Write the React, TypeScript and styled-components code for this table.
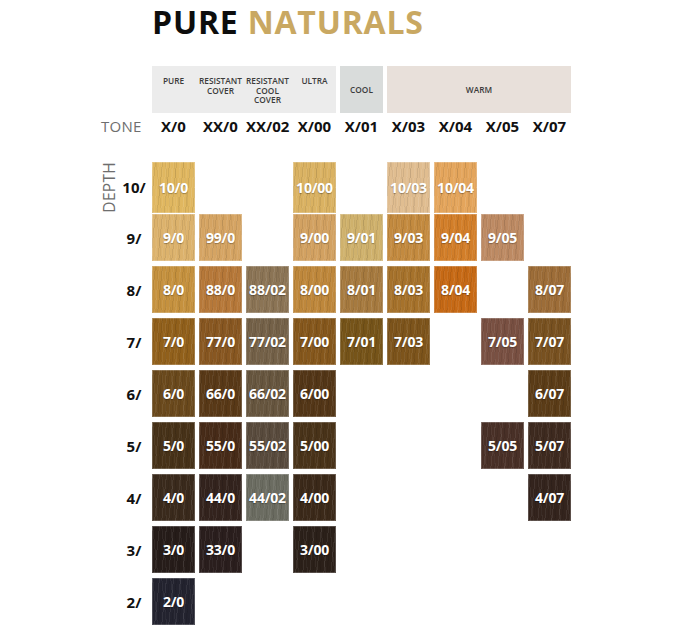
import styled, { createGlobalStyle, css } from 'styled-components';

type Shade = { code: string; color: string } | null;

const s = (code: string, color: string): Shade => ({ code, color });
const _ = null;

const groups = [
    { kind: 'neutral' as const, labels: [['PURE'], ['RESISTANT', 'COVER'], ['RESISTANT', 'COOL', 'COVER'], ['ULTRA']] },
    { kind: 'cool' as const, labels: [['COOL']] },
    { kind: 'warm' as const, labels: [['WARM']] },
];

const tones = ['X/0', 'XX/0', 'XX/02', 'X/00', 'X/01', 'X/03', 'X/04', 'X/05', 'X/07'];

const rows: { depth: string; shades: Shade[] }[] = [
    { depth: '10/', shades: [s('10/0', '#e0b760'), _, _, s('10/00', '#dab262'), _, s('10/03', '#e0bd90'), s('10/04', '#e4a55c'), _, _] },
    { depth: '9/', shades: [s('9/0', '#dcb26c'), s('99/0', '#d5a463'), _, s('9/00', '#d2a161'), s('9/01', '#cfb16c'), s('9/03', '#c38a3f'), s('9/04', '#d27e29'), s('9/05', '#bd8a63'), _] },
    { depth: '8/', shades: [s('8/0', '#c5913e'), s('88/0', '#b67839'), s('88/02', '#8b7455'), s('8/00', '#be873b'), s('8/01', '#a67a3f'), s('8/03', '#a6722b'), s('8/04', '#c66915'), _, s('8/07', '#9d6d38')] },
    { depth: '7/', shades: [s('7/0', '#91601b'), s('77/0', '#885721'), s('77/02', '#746148'), s('7/00', '#85571c'), s('7/01', '#765419'), s('7/03', '#7d541b'), _, s('7/05', '#795042'), s('7/07', '#785120')] },
    { depth: '6/', shades: [s('6/0', '#6a491c'), s('66/0', '#593917'), s('66/02', '#67563f'), s('6/00', '#533617'), _, _, _, _, s('6/07', '#5b3c17')] },
    { depth: '5/', shades: [s('5/0', '#473218'), s('55/0', '#472b18'), s('55/02', '#594b3d'), s('5/00', '#493319'), _, _, _, s('5/05', '#493027'), s('5/07', '#3e2a1f')] },
    { depth: '4/', shades: [s('4/0', '#3a2a1c'), s('44/0', '#33231d'), s('44/02', '#6b6c61'), s('4/00', '#3b2919'), _, _, _, _, s('4/07', '#34241d')] },
    { depth: '3/', shades: [s('3/0', '#261c19'), s('33/0', '#2a1e1d'), _, s('3/00', '#2b2019'), _, _, _, _, _] },
    { depth: '2/', shades: [s('2/0', '#23232f'), _, _, _, _, _, _, _, _] },
];

export default function App() {
    return (
        <>
            <GlobalStyle />
            <Page>
                <Title>
                    PURE <Gold>NATURALS</Gold>
                </Title>

                <HeaderRow>
                    <span />
                    {groups.map(g => (
                        <Group key={g.kind} $kind={g.kind}>
                            {g.labels.map((lines, i) => (
                                <GroupLabel key={i}>
                                    {lines.map(l => <div key={l}>{l}</div>)}
                                </GroupLabel>
                            ))}
                        </Group>
                    ))}
                </HeaderRow>

                <ToneRow>
                    <AxisLabel>TONE</AxisLabel>
                    {tones.map(t => <Tone key={t}>{t}</Tone>)}
                </ToneRow>

                <SwatchGrid>
                    {rows.map((row, r) => (
                        <Row key={row.depth}>
                            <DepthCell>
                                {r === 0 ? <DepthAxis>DEPTH</DepthAxis> : <span />}
                                <Depth>{row.depth}</Depth>
                            </DepthCell>
                            {row.shades.map((shade, i) =>
                                shade ? (
                                    <Swatch key={i} style={{ backgroundColor: shade.color }}>
                                        {shade.code}
                                    </Swatch>
                                ) : (
                                    <span key={i} />
                                )
                            )}
                        </Row>
                    ))}
                </SwatchGrid>
            </Page>
        </>
    );
}

const GlobalStyle = createGlobalStyle`
    html, body {
        margin: 0;
        padding: 0;
        background: #ffffff;
    }
    body {
        font-family: "Open Sans", "Liberation Sans", sans-serif;
        color: #111;
    }
`;

const columns = css`
    display: grid;
    grid-template-columns: 50px repeat(9, 43px);
    column-gap: 4px;
`;

const Page = styled.div`
    width: 676px;
    height: 627px;
    padding: 2px 0 0 98px;
    box-sizing: border-box;
    overflow: hidden;
`;

const Title = styled.h1`
    margin: 0 0 0 54px;
    font-size: 32px;
    line-height: 40px;
    font-weight: 700;
    letter-spacing: 0.8px;
    color: #0d0d0d;
`;

const Gold = styled.span`
    color: #c9a862;
`;

const HeaderRow = styled.div`
    ${columns};
    margin-top: 24px;
    height: 47px;
`;

const groupBg = { neutral: '#ececec', cool: '#d9dcdb', warm: '#e8e0da' };

const Group = styled.div<{ $kind: 'neutral' | 'cool' | 'warm' }>`
    background: ${p => groupBg[p.$kind]};
    grid-column: span ${p => (p.$kind === 'cool' ? 1 : 4)};
    display: ${p => (p.$kind === 'neutral' ? 'grid' : 'flex')};
    grid-template-columns: repeat(4, 43px);
    column-gap: 4px;
    align-items: ${p => (p.$kind === 'neutral' ? 'start' : 'center')};
    justify-content: center;
    padding-top: ${p => (p.$kind === 'neutral' ? '10px' : '0')};
    box-sizing: border-box;
`;

const GroupLabel = styled.div`
    font-size: 8.3px;
    line-height: 9.6px;
    font-weight: 600;
    color: #3b3b3b;
    text-align: center;
    white-space: nowrap;
`;

const ToneRow = styled.div`
    ${columns};
    margin-top: 3px;
    height: 20px;
    align-items: center;
`;

const AxisLabel = styled.div`
    font-size: 15px;
    font-weight: 400;
    color: #6e6e6e;
    margin-left: 3px;
    letter-spacing: 0.3px;
`;

const Tone = styled.div`
    font-size: 15px;
    font-weight: 700;
    text-align: center;
    color: #111;
`;

const SwatchGrid = styled.div`
    margin-top: 26px;
    display: flex;
    flex-direction: column;
    gap: 5px;
`;

const Row = styled.div`
    ${columns};
    height: 47px;
`;

const DepthCell = styled.div`
    display: grid;
    grid-template-columns: 22px 28px;
    align-items: center;
`;

const DepthAxis = styled.div`
    writing-mode: vertical-rl;
    transform: rotate(180deg);
    justify-self: center;
    font-size: 15.5px;
    font-weight: 400;
    color: #6e6e6e;
    letter-spacing: 0.3px;
`;

const Depth = styled.div`
    font-size: 15px;
    font-weight: 700;
    text-align: center;
    color: #111;
`;

const Swatch = styled.div`
    display: flex;
    align-items: center;
    justify-content: center;
    font-size: 14px;
    font-weight: 700;
    letter-spacing: -0.2px;
    color: #ffffff;
    text-shadow: 0 1px 1px rgba(0, 0, 0, 0.3);
    box-shadow: inset 0 0 0 1px rgba(255, 255, 255, 0.2);
    background-image:
        repeating-linear-gradient(
            96deg,
            rgba(255, 255, 255, 0.07) 0 1px,
            transparent 1px 3px,
            rgba(0, 0, 0, 0.08) 3px 4px,
            transparent 4px 7px
        ),
        repeating-linear-gradient(
            84deg,
            rgba(0, 0, 0, 0.05) 0 1px,
            transparent 1px 5px,
            rgba(255, 255, 255, 0.05) 5px 6px,
            transparent 6px 9px
        );
`;
